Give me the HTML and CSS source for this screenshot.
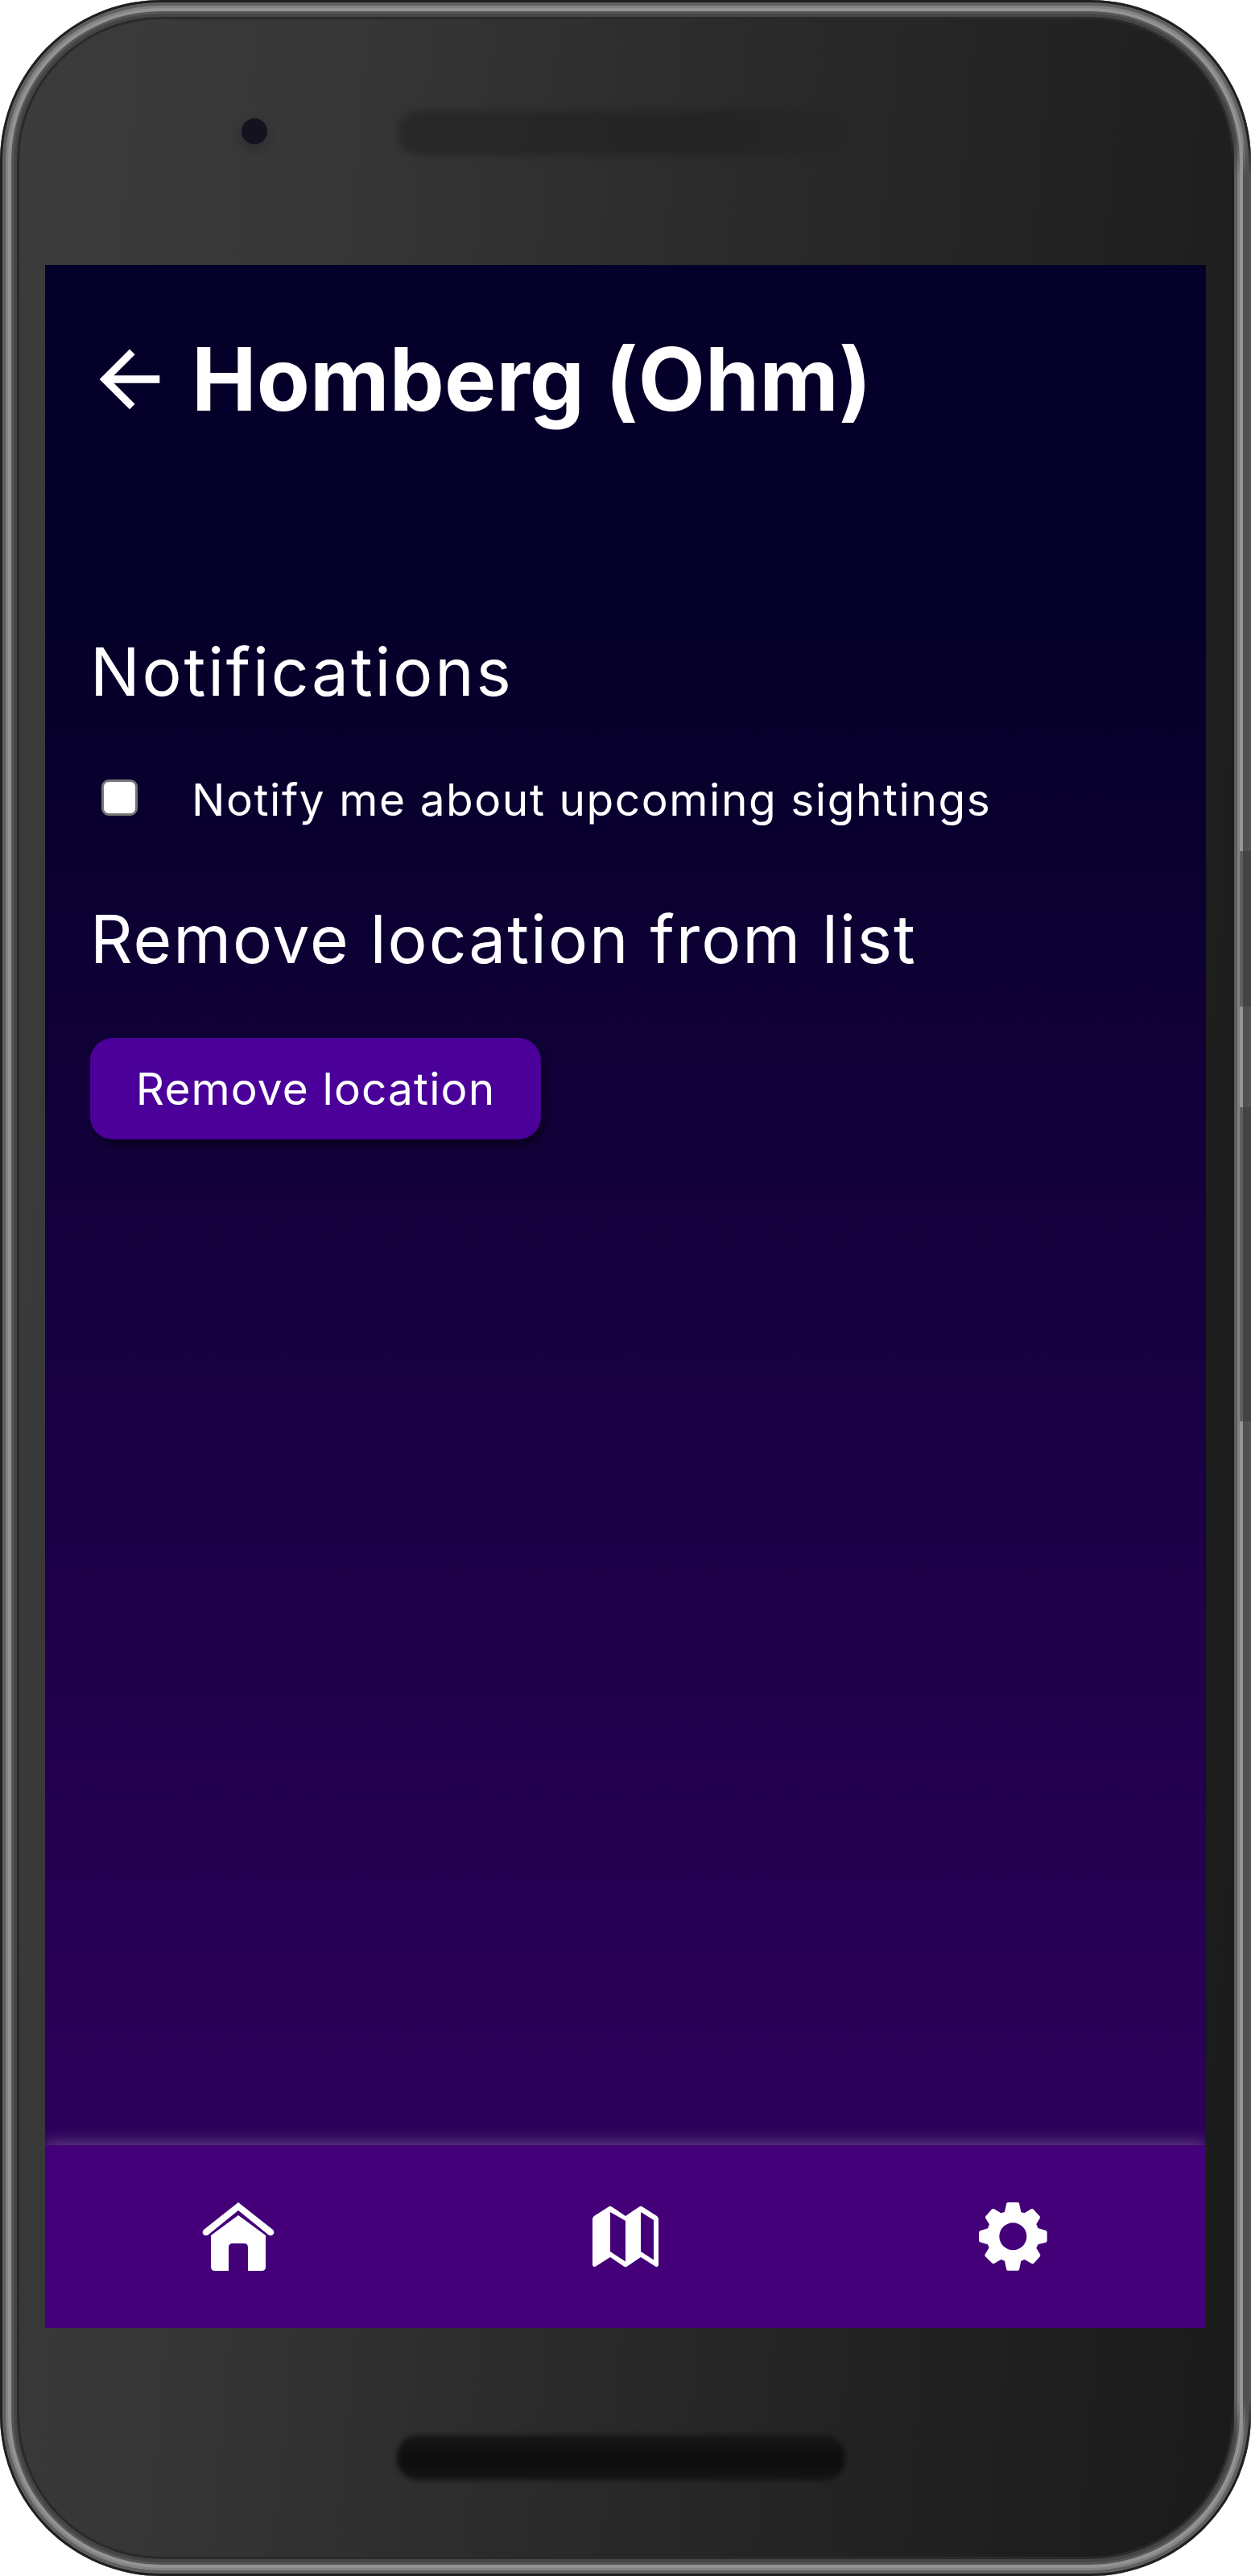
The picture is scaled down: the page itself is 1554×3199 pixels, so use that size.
FILE: index.html
```html
<!DOCTYPE html>
<html lang="en">
<head>
<meta charset="utf-8">
<title>Homberg (Ohm)</title>
<link rel="stylesheet" href="styles.css">
</head>
<body>
<div class="phone">
  <div class="bezel-top"><span class="camera"></span><span class="speaker"></span></div>
  <div class="screen">
    <main class="content">
      <header class="header">
        <svg class="back" viewBox="0 0 24 24"><path d="M20 11H7.83l5.59-5.59L12 4l-8 8 8 8 1.41-1.41L7.83 13H20z"/></svg>
        <h1 class="title">Homberg (Ohm)</h1>
      </header>
      <h2 class="heading heading-notify">Notifications</h2>
      <label class="option"><input class="check" type="checkbox"><span>Notify me about upcoming sightings</span></label>
      <h2 class="heading heading-remove">Remove location from list</h2>
      <button class="button">Remove location</button>
    </main>
    <nav class="nav">
      <a class="tab"><svg class="icon" viewBox="0 0 96 96"><path d="M48 5 5 39q-2 2-1 5 3 4 7 1L48 15l37 30q4 3 7-1 1-3-1-5zM48 21 14 46V85q0 5 5 5h17V61q0-5 5-5h14q5 0 5 5v29h17q5 0 5-5V46z"/></svg></a>
      <a class="tab"><svg class="icon" viewBox="0 0 96 96"><path fill-rule="evenodd" d="M27 10.500q2-1.500 4 0L48 22 65 10.500q2-1.500 4 0L87 22q2 1.500 2 3.500V83q-1 3-4 1.500L67 73 50 84.500q-2 1.500-4 0L29 73 11 84.500q-3 1.500-4-1.500V25.500q0-2 2-3.500zM29 17V66L48 78.500V28zM67 17V66L83 76.500V27z"/></svg></a>
      <a class="tab"><svg class="icon" viewBox="15 30 288 288"><path fill-rule="evenodd" d="M140 45H179L183 48 190 81 203 85 228 69 234 69 260 97 261 103 247 126 253 141 283 150 287 155V190L283 194 253 202 247 215 262 240 261 246 237 273 231 274 203 258 190 263 183 296 179 299H140L136 296 129 263 115 258 90 273 84 273 56 246 55 240 71 214 66 202 36 193 33 189V156L37 151 66 142 72 127 57 103 58 97 82 70 89 69 115 85 129 81 136 48zM160 121A51 51 0 1 0 160 223 51 51 0 1 0 160 121z"/></svg></a>
    </nav>
  </div>
  <div class="bezel-bottom"><span class="speaker-low"></span></div>
  <span class="rim"></span>
  <span class="rail"></span>
  <span class="side side-power"></span>
  <span class="side side-volume"></span>
</div>
</body>
</html>
```
FILE: styles.css
```css
* { box-sizing: border-box; }

body {
  margin: 0;
  background: #fff;
  font-family: Inter, sans-serif;
  color: #fff;
}

.phone {
  position: relative;
  width: 1554px;
  height: 3199px;
  border-radius: 200px;
  padding: 0 56px;
  overflow: hidden;
  background: linear-gradient(95deg, #3c3c3c 0%, #363636 25%, #2b2b2b 50%, #202020 80%, #1a1a1a 100%);
}

.bezel-top {
  display: flex;
  align-items: flex-start;
  height: 329px;
  padding: 137px 0 0 244px;
}

.camera {
  width: 32px;
  height: 32px;
  margin-top: 10px;
  border-radius: 50%;
  background: #14121f;
  box-shadow: 0 6px 14px rgba(20, 18, 40, .3);
}

.speaker {
  width: 558px;
  height: 56px;
  margin-left: 162px;
  border-radius: 28px;
  background: linear-gradient(90deg, #282828, #242424 70%, rgba(36, 36, 36, .4));
  filter: blur(5px);
}

.screen {
  height: 2562px;
  display: flex;
  flex-direction: column;
  overflow: hidden;
}

.content {
  flex: 1;
  display: flex;
  flex-direction: column;
  align-items: flex-start;
  padding: 86px 56px 0;
  background: linear-gradient(180deg, #050029 0%, #050029 20%, #2c005b 100%);
}

.header {
  display: flex;
  align-items: center;
  height: 112px;
}

.back {
  width: 112px;
  height: 112px;
  margin-left: -7px;
  fill: #fff;
}

h1, h2 { margin: 0; }

.title {
  margin-left: 21px;
  font-size: 108px;
  line-height: 112px;
  letter-spacing: .1px;
}

.heading {
  font-size: 82px;
  line-height: 100px;
  font-weight: 400;
}

.heading-notify {
  margin-top: 258px;
  letter-spacing: 2.8px;
}

.option {
  display: flex;
  align-items: center;
  margin-top: 73px;
  font-size: 55px;
  line-height: 70px;
  letter-spacing: 1.55px;
}

.check {
  appearance: none;
  width: 45px;
  height: 45px;
  margin: 0 67px 5px 14px;
  border: 3px solid #767676;
  border-radius: 9px;
  background: #fff;
}

.heading-remove {
  margin-top: 89px;
  letter-spacing: 1.95px;
}

.button {
  width: 560px;
  height: 126px;
  margin-top: 72px;
  border: 0;
  border-radius: 28px;
  background: #4b0099;
  box-shadow: 4px 8px 8px rgba(0, 0, 0, .42);
  color: #fff;
  font: 55px Inter, sans-serif;
  letter-spacing: 1.1px;
  white-space: nowrap;
}

.nav {
  display: flex;
  justify-content: space-around;
  align-items: center;
  height: 227px;
  padding-top: 1px;
  background: #440078;
  box-shadow: 0 -3px 18px rgba(255, 255, 255, .27);
}

.tab { display: flex; }

.icon {
  width: 96px;
  height: 96px;
  fill: #fff;
}

.bezel-bottom {
  height: 308px;
  padding: 133px 0 0 437px;
}

.speaker-low {
  display: block;
  width: 557px;
  height: 56px;
  border-radius: 26px;
  background: linear-gradient(#171717, #0f0f0f 40%, #0e0e0e 65%, #151515);
  filter: blur(3px);
}

/* metal edge running round the body */
.rim {
  position: absolute;
  inset: 0;
  border-radius: 200px;
  box-shadow:
    inset 0 0 0 3px #202020,
    inset 0 0 0 7px #5f5f5f,
    inset 0 0 0 10px #828282,
    inset 0 0 0 14px #939393,
    inset 0 0 0 17px #565656,
    inset 0 0 0 21px #454545,
    inset 0 0 0 24px #2a2a2a;
}

.rail {
  position: absolute;
  top: 170px;
  bottom: 170px;
  right: 0;
  width: 24px;
  background: linear-gradient(90deg, #1b1b1b 3px, #5f5f5f 3px 7px, #808080 7px 10px, #969696 10px 14px, #4f4f4f 14px 21px, #555 21px);
  mask-image: linear-gradient(transparent, #000 50px, #000 calc(100% - 50px), transparent);
}

.side {
  position: absolute;
  right: 0;
  width: 14px;
  background: linear-gradient(90deg, #606060 4px, #444 4px);
}

.side-power { top: 1057px; height: 193px; }

.side-volume { top: 1375px; height: 390px; }
```
